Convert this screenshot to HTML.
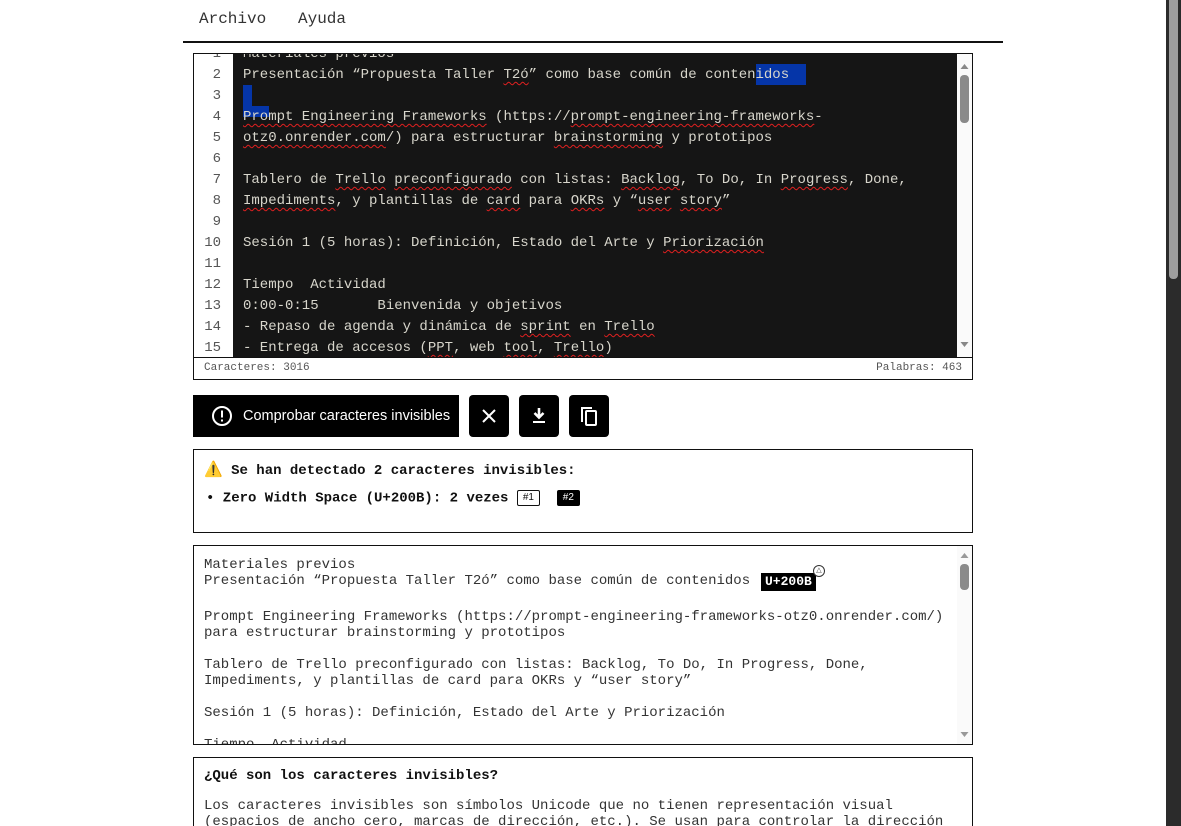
<!DOCTYPE html>
<html><head><meta charset="utf-8"><style>
*{box-sizing:border-box;margin:0;padding:0}
html,body{width:1181px;height:826px;overflow:hidden}
body{background:#fff;font-family:"Liberation Mono",monospace;position:relative}
.abs{position:absolute}
.menu{top:10px;font-size:16px;color:#333;white-space:pre}
.hr{left:183px;top:41px;width:820px;height:2px;background:#111}
.ed{left:193px;top:53px;width:780px;height:327px;border:1px solid #111;overflow:hidden;background:#fff}
.gut{left:0;top:0;width:39px;height:303px;background:#fff}
.code{left:39px;top:0;width:724px;height:303px;background:#151515;overflow:hidden}
.ln{position:absolute;left:0;width:39px;text-align:right;padding-right:12px;font-size:14px;color:#555;height:21px;line-height:21px}
.cl{position:absolute;left:10px;font-size:14px;color:#d8d6cc;height:21px;line-height:21px;white-space:pre}
.w{text-decoration:underline wavy #e02020;text-decoration-thickness:1px;text-underline-offset:3px}
.sel{position:absolute;background:#0535a8}
.sb{left:763px;top:0;width:15px;height:303px;background:#fafafa}
.status{left:0;top:303px;width:778px;height:22px;border-top:1px solid #111;font-size:11px;color:#555;line-height:21px;padding:0 10px;display:flex;justify-content:space-between}
.btn{top:395px;height:42px;background:#000;color:#fff}
.main{left:193px;width:266px;font-family:"Liberation Sans",sans-serif;font-size:14.5px;display:flex;align-items:center;padding-left:18px}
.ib{width:40px;height:42px;border-radius:4px;display:flex;align-items:center;justify-content:center}
.box{left:193px;width:780px;border:1px solid #111;background:#fff}
.b{font-weight:bold;font-size:14px;color:#111;white-space:pre}
.badge{display:inline-block;font-family:"Liberation Sans",sans-serif;font-size:10px;font-weight:normal;height:16px;line-height:14px;padding:0 5px;border-radius:2px;vertical-align:middle}
.lo{font-size:14px;color:#333;white-space:pre;line-height:16px;position:absolute;left:10px}
</style></head><body>
<div class="abs menu" style="left:199px">Archivo</div>
<div class="abs menu" style="left:298px">Ayuda</div>
<div class="abs hr"></div>

<div class="abs ed">
 <div class="abs gut">
  <div class="ln" style="top:-10px">1</div><div class="ln" style="top:11px">2</div><div class="ln" style="top:32px">3</div><div class="ln" style="top:53px">4</div><div class="ln" style="top:74px">5</div><div class="ln" style="top:95px">6</div><div class="ln" style="top:116px">7</div><div class="ln" style="top:137px">8</div><div class="ln" style="top:158px">9</div><div class="ln" style="top:179px">10</div><div class="ln" style="top:200px">11</div><div class="ln" style="top:221px">12</div><div class="ln" style="top:242px">13</div><div class="ln" style="top:263px">14</div><div class="ln" style="top:284px">15</div>
 </div>
 <div class="abs code">
  <div class="sel" style="left:523px;top:10px;width:50px;height:21px"></div>
  <div class="sel" style="left:10px;top:31px;width:9px;height:21px"></div>
  <div class="sel" style="left:10px;top:52px;width:26px;height:11px"></div>
  <div class="cl" style="top:-10px">Materiales previos</div>
  <div class="cl" style="top:11px">Presentación “Propuesta Taller <span class="w">T2ó</span>” como base común de contenidos</div>
  <div class="cl" style="top:53px"><span class="w">Prompt Engineering Frameworks</span> (https://<span class="w">prompt-engineering-frameworks</span>-</div>
  <div class="cl" style="top:74px"><span class="w">otz0.onrender.com</span>/) para estructurar <span class="w">brainstorming</span> y prototipos</div>
  <div class="cl" style="top:116px">Tablero de <span class="w">Trello</span> <span class="w">preconfigurado</span> con listas: <span class="w">Backlog</span>, To Do, In <span class="w">Progress</span>, Done,</div>
  <div class="cl" style="top:137px"><span class="w">Impediments</span>, y plantillas de <span class="w">card</span> para <span class="w">OKRs</span> y “<span class="w">user</span> <span class="w">story</span>”</div>
  <div class="cl" style="top:179px">Sesión 1 (5 horas): Definición, Estado del Arte y <span class="w">Priorización</span></div>
  <div class="cl" style="top:221px">Tiempo  Actividad</div>
  <div class="cl" style="top:242px">0:00-0:15       Bienvenida y objetivos</div>
  <div class="cl" style="top:263px">- Repaso de agenda y dinámica de <span class="w">sprint</span> en <span class="w">Trello</span></div>
  <div class="cl" style="top:284px">- Entrega de accesos (<span class="w">PPT</span>, web <span class="w">tool</span>, <span class="w">Trello</span>)</div>
 </div>
 <div class="abs sb">
  <svg width="15" height="303" style="position:absolute;left:0;top:0"><path d="M3.5 15 L7.5 10 L11.5 15Z" fill="#888"/><rect x="3" y="21" width="9" height="48" rx="4" fill="#8a8a8a"/><path d="M3.5 288 L7.5 293 L11.5 288Z" fill="#888"/></svg>
 </div>
 <div class="abs status"><span>Caracteres: 3016</span><span>Palabras: 463</span></div>
</div>

<div class="abs btn main"><svg width="22" height="22" viewBox="0 0 22 22" style="margin-right:10px"><circle cx="11" cy="11" r="9" fill="none" stroke="#fff" stroke-width="2"/><rect x="10" y="5.5" width="2" height="7" fill="#fff"/><rect x="10" y="14.5" width="2" height="2" fill="#fff"/></svg>Comprobar caracteres invisibles</div>
<div class="abs btn ib" style="left:469px"><svg width="16" height="16"><path d="M2 2L14 14M14 2L2 14" stroke="#fff" stroke-width="2"/></svg></div>
<div class="abs btn ib" style="left:519px"><svg width="16" height="18"><path d="M8 1V10M3.5 6L8 10.5L12.5 6" stroke="#fff" stroke-width="2.6" fill="none"/><rect x="2" y="14" width="12" height="2" fill="#fff"/></svg></div>
<div class="abs btn ib" style="left:569px"><svg width="20" height="22"><path d="M3 17V3H13" stroke="#fff" stroke-width="2" fill="none"/><rect x="7" y="6" width="10" height="14" rx="1" stroke="#fff" stroke-width="2" fill="none"/></svg></div>

<div class="abs box" style="top:449px;height:84px">
 <div class="abs b" style="left:10px;top:10px"><span style="font-size:15px">⚠️</span> Se han detectado 2 caracteres invisibles:</div>
 <div class="abs b" style="left:12px;top:40px">• Zero Width Space (U+200B): 2 vezes <span class="badge" style="border:1px solid #111;color:#111">#1</span>  <span class="badge" style="background:#000;color:#fff;border:1px solid #000">#2</span></div>
</div>

<div class="abs box" style="top:545px;height:200px;overflow:hidden">
 <div class="lo" style="top:11px">Materiales previos
Presentación “Propuesta Taller T2ó” como base común de contenidos </div>
 <div class="abs" style="left:567px;top:27px;background:#000;color:#fff;font-weight:bold;font-size:13px;padding:0 4px;height:18px;line-height:18px">U+200B</div>
 <div class="abs" style="left:619px;top:19px;width:12px;height:12px;border:1px solid #333;border-radius:50%;background:#fff;font-size:7px;text-align:center;line-height:10px;color:#333">△</div>
 <div class="lo" style="top:63px">Prompt Engineering Frameworks (https://prompt-engineering-frameworks-otz0.onrender.com/)
para estructurar brainstorming y prototipos</div>
 <div class="lo" style="top:111px">Tablero de Trello preconfigurado con listas: Backlog, To Do, In Progress, Done,
Impediments, y plantillas de card para OKRs y “user story”</div>
 <div class="lo" style="top:159px">Sesión 1 (5 horas): Definición, Estado del Arte y Priorización</div>
 <div class="lo" style="top:191px">Tiempo  Actividad</div>
 <svg width="15" height="198" style="position:absolute;left:763px;top:0"><rect width="15" height="198" fill="#fafafa"/><path d="M3.5 12 L7.5 7 L11.5 12Z" fill="#999"/><rect x="3" y="18" width="9" height="26" rx="4" fill="#8a8a8a"/><path d="M3.5 186 L7.5 191 L11.5 186Z" fill="#999"/></svg>
</div>

<div class="abs box" style="top:757px;height:80px">
 <div class="abs b" style="left:10px;top:10px">¿Qué son los caracteres invisibles?</div>
 <div class="lo" style="top:40px;color:#333">Los caracteres invisibles son símbolos Unicode que no tienen representación visual
(espacios de ancho cero, marcas de dirección, etc.). Se usan para controlar la dirección</div>
</div>

<div class="abs" style="left:1166px;top:0;width:15px;height:826px;background:#2b2b2b"></div>
<div class="abs" style="left:1169px;top:0;width:9px;height:279px;background:#9e9e9e;border-radius:0 0 4px 4px"></div>
</body></html>
